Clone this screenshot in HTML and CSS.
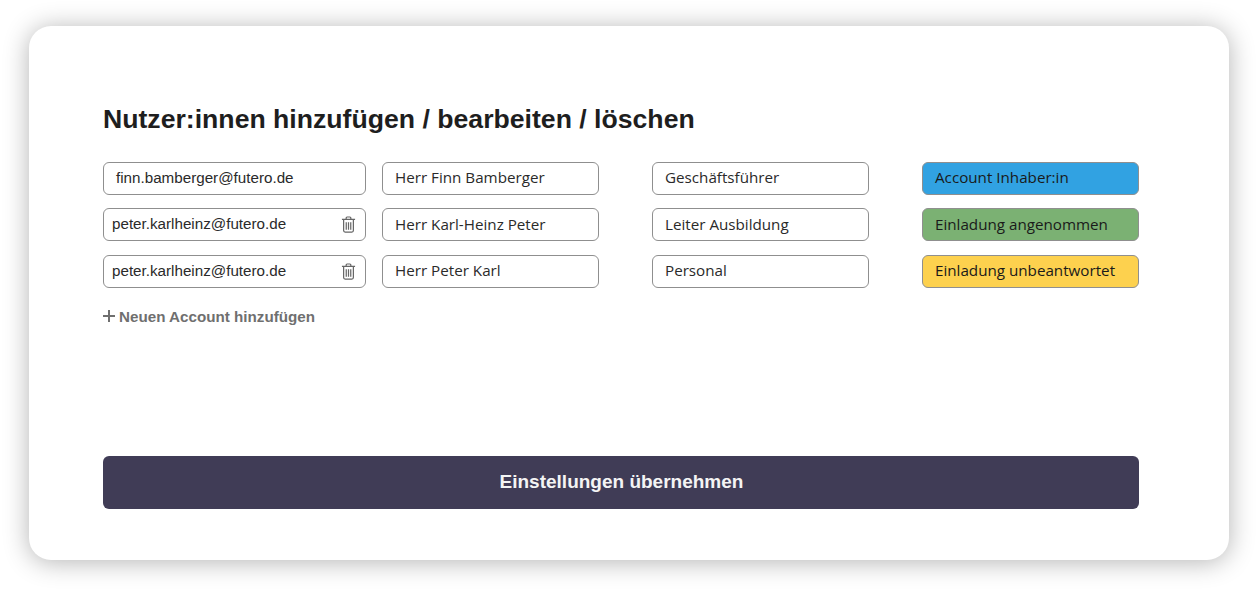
FILE: index.html
```html
<!DOCTYPE html>
<html lang="de">
<head>
<meta charset="utf-8">
<title>Nutzer:innen</title>
<link rel="stylesheet" href="styles.css">
</head>
<body>
<main class="card">
  <h1 class="title">Nutzer:innen hinzufügen / bearbeiten / löschen</h1>
  <div class="rows">
    <div class="row">
      <div class="field email owner">finn.bamberger@futero.de</div>
      <div class="field name">Herr Finn Bamberger</div>
      <div class="field role">Geschäftsführer</div>
      <div class="field status blue">Account Inhaber:in</div>
    </div>
    <div class="row">
      <div class="field email"><span>peter.karlheinz@futero.de</span>
        <svg class="trash" viewBox="0 0 16 18" fill="none" stroke="#666" stroke-width="1.3"><path d="M1 3.5h14M5.5 3.5V2a1 1 0 0 1 1-1h3a1 1 0 0 1 1 1v1.5M2.8 3.5v12a1.6 1.6 0 0 0 1.6 1.6h7.2a1.6 1.6 0 0 0 1.6-1.6v-12M5.6 6.5v8M8 6.5v8M10.4 6.5v8"/></svg>
      </div>
      <div class="field name">Herr Karl-Heinz Peter</div>
      <div class="field role">Leiter Ausbildung</div>
      <div class="field status green">Einladung angenommen</div>
    </div>
    <div class="row">
      <div class="field email"><span>peter.karlheinz@futero.de</span>
        <svg class="trash" viewBox="0 0 16 18" fill="none" stroke="#666" stroke-width="1.3"><path d="M1 3.5h14M5.5 3.5V2a1 1 0 0 1 1-1h3a1 1 0 0 1 1 1v1.5M2.8 3.5v12a1.6 1.6 0 0 0 1.6 1.6h7.2a1.6 1.6 0 0 0 1.6-1.6v-12M5.6 6.5v8M8 6.5v8M10.4 6.5v8"/></svg>
      </div>
      <div class="field name">Herr Peter Karl</div>
      <div class="field role">Personal</div>
      <div class="field status yellow">Einladung unbeantwortet</div>
    </div>
  </div>
  <div class="add"><span class="plus"></span>Neuen Account hinzufügen</div>
  <button class="submit" type="button">Einstellungen übernehmen</button>
</main>
</body>
</html>
```
FILE: styles.css
```css
html, body { margin: 0; height: 100%; background: #fff; }
body { padding: 26px 29px 32px; box-sizing: border-box; overflow: hidden; }
.card {
  box-sizing: border-box;
  height: 534px;
  background: #fff;
  border-radius: 22px;
  box-shadow: 0 2px 26px rgba(0,0,0,.3);
  padding: 77px 90px 51px 74px;
  display: flex;
  flex-direction: column;
}
.title {
  margin: 0 0 26.6px;
  font: bold 26.64px/32px "Liberation Sans", Arial, sans-serif;
  color: #1e1e1e;
}
.rows { display: flex; flex-direction: column; gap: 13.5px; }
.row { display: flex; column-gap: 16px; }
.field {
  box-sizing: border-box;
  width: 217px;
  height: 33px;
  border: 1px solid #8f8f8f;
  border-radius: 6px;
  padding: 0 12px;
  display: flex;
  align-items: center;
  font: 15.2px/1 "Open Sans", sans-serif;
  color: #2a2a2a;
  background: #fff;
}
.name, .role { margin-right: 37px; }
.email {
  width: 263px;
  font: 15.2px/1 "Liberation Sans", Arial, sans-serif;
  justify-content: space-between;
  padding: 0 8px 1px;
}
.owner { padding-left: 12px; }
.trash { width: 15px; height: 17px; flex: none; margin-right: 1px; position: relative; top: 0.5px; }
.status { color: #1a1a1a; }
.blue { background: #31a2e2; }
.green { background: #7bb173; }
.yellow { background: #fdd14e; }
.add {
  display: flex;
  align-items: center;
  margin-top: 20px;
  font: bold 15.2px/17px "Liberation Sans", Arial, sans-serif;
  color: #6f6f6f;
}
.plus { position: relative; width: 12px; height: 12px; margin-right: 4px; }
.plus::before, .plus::after { content: ""; position: absolute; background: #6f6f6f; }
.plus::before { left: 0; right: 0; top: 5px; height: 2px; }
.plus::after { top: 0; bottom: 0; left: 5px; width: 2px; }
.submit {
  margin-top: auto;
  height: 53px;
  width: 1036px;
  border: 0;
  border-radius: 6px;
  padding: 0 0 2px 1px;
  background: #403c56;
  color: #f4f4f4;
  font: bold 19px/1 "Liberation Sans", Arial, sans-serif;
}
```
